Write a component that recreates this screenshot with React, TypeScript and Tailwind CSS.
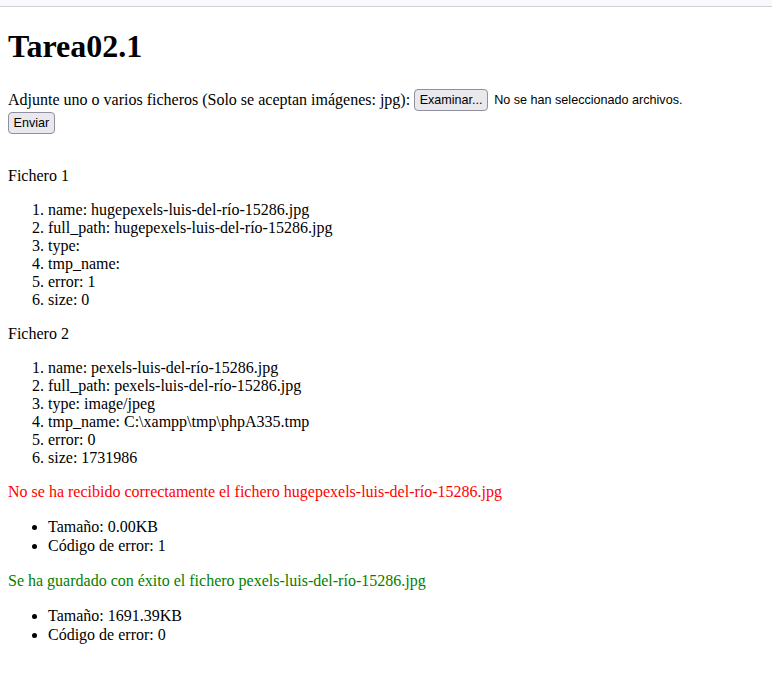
import React from "react";

const serif = { fontFamily: '"Liberation Serif", "Times New Roman", serif' };

function Btn({ children }: { children: React.ReactNode }) {
  return (
    <span className="inline-block align-middle rounded-[4px] border border-[#8f8f9d] bg-[#e9e9ed] px-[4.5px] py-[1px] text-[12.6px] leading-[18px] text-black font-['Liberation_Sans',Arial,sans-serif]">
      {children}
    </span>
  );
}

export default function App() {
  const f1 = [
    "name: hugepexels-luis-del-río-15286.jpg",
    "full_path: hugepexels-luis-del-río-15286.jpg",
    "type:",
    "tmp_name:",
    "error: 1",
    "size: 0",
  ];
  const f2 = [
    "name: pexels-luis-del-río-15286.jpg",
    "full_path: pexels-luis-del-río-15286.jpg",
    "type: image/jpeg",
    "tmp_name: C:\\xampp\\tmp\\phpA335.tmp",
    "error: 0",
    "size: 1731986",
  ];
  return (
    <div className="min-h-[674px] bg-white text-black">
      <div className="h-[7px] bg-[#f9f9fb] border-b border-[#cfcfd8]" />
      <div className="px-2 pb-8 text-base leading-[18px]" style={serif}>
        <h1 className="text-[32px] font-bold leading-[36.8px] pt-[21.4px] mb-[21.4px]">Tarea02.1</h1>
        <div className="h-[26px] flex items-center whitespace-nowrap">
          <span>Adjunte uno o varios ficheros (Solo se aceptan imágenes: jpg):</span>
          <span className="ml-[4px]"><Btn>Examinar...</Btn></span>
          <span className="ml-[6px] text-[12.6px] font-['Liberation_Sans',Arial,sans-serif]">No se han seleccionado archivos.</span>
        </div>
        <div className="h-[20px] flex items-center">
          <Btn>Enviar</Btn>
        </div>
        <p className="mt-[34px]">Fichero 1</p>
        <ol className="list-decimal pl-10 my-4">
          {f1.map((t) => (
            <li key={t}>{t}</li>
          ))}
        </ol>
        <p>Fichero 2</p>
        <ol className="list-decimal pl-10 my-4">
          {f2.map((t) => (
            <li key={t}>{t}</li>
          ))}
        </ol>
        <p className="text-[#ff0000]">No se ha recibido correctamente el fichero hugepexels-luis-del-río-15286.jpg</p>
        <ul className="list-disc pl-10 my-4 leading-[19.5px]">
          <li>Tamaño: 0.00KB</li>
          <li>Código de error: 1</li>
        </ul>
        <p className="text-[#008000]">Se ha guardado con éxito el fichero pexels-luis-del-río-15286.jpg</p>
        <ul className="list-disc pl-10 my-4 leading-[19.5px]">
          <li>Tamaño: 1691.39KB</li>
          <li>Código de error: 0</li>
        </ul>
      </div>
    </div>
  );
}
